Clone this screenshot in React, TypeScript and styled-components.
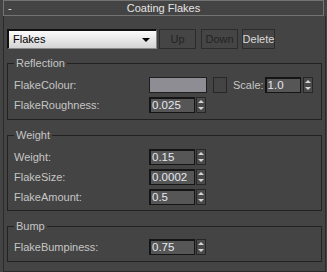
import React from "react";
import styled, { createGlobalStyle } from "styled-components";

const GlobalStyle = createGlobalStyle`
  html, body {
    margin: 0;
    background: #444444;
  }
  body {
    font-family: "Liberation Sans", Arial, sans-serif;
    font-size: 11px;
    color: #c6c6c6;
  }
`;

const Rollout = styled.div`
  width: 323px;
  margin-left: 3px;
  box-sizing: border-box;
`;

const Header = styled.div`
  height: 16px;
  margin-right: 2px;
  box-sizing: border-box;
  border: 1px solid #737373;
  display: flex;
  align-items: center;
  line-height: 14px;
  color: #e6e6e6;
  .toggle {
    width: 12px;
    padding-left: 4px;
  }
  .title {
    flex: 1;
    text-align: center;
  }
`;

const Body = styled.div`
  height: 256px;
  box-sizing: border-box;
  border: 1px solid #2b2b2b;
  border-top: none;
  padding: 13px 3px 9px 3px;
  display: flex;
  flex-direction: column;
`;

const Toolbar = styled.div`
  display: flex;
  align-items: center;
  height: 20px;
  margin-bottom: 7px;
`;

const Dropdown = styled.div`
  position: relative;
  width: 150px;
  height: 20px;
  box-sizing: border-box;
  border: 1px solid #8a8a8a;
  border-top: 2px solid #101010;
  border-left: 2px solid #101010;
  background: linear-gradient(#fbfbfb, #e4e4e4 60%, #d4d4d4);
  color: #000;
  font-size: 11px;
  line-height: 17px;
  padding-left: 4px;
  &::after {
    content: "";
    position: absolute;
    right: 6px;
    top: 7px;
    border-left: 4px solid transparent;
    border-right: 4px solid transparent;
    border-top: 4px solid #000;
  }
`;

const Button = styled.div<{ $w: number; $ml: number; $disabled?: boolean }>`
  width: ${({ $w }) => $w}px;
  margin-left: ${({ $ml }) => $ml}px;
  height: 20px;
  box-sizing: border-box;
  border: 1px solid #2c2c2c;
  background: #454545;
  color: ${({ $disabled }) => ($disabled ? "#232323" : "#dadada")};
  font-size: 11px;
  display: flex;
  align-items: center;
  justify-content: center;
`;

const Group = styled.fieldset<{ $pt?: number; $pb?: number }>`
  margin: 0 0 8px 0;
  padding: ${({ $pt = 7, $pb = 6 }) => `${$pt}px 6px ${$pb}px 6px`};
  border: 1px solid #222222;
  min-inline-size: 0;
  display: flex;
  flex-direction: column;
  gap: 4px;
  &:last-child {
    margin-bottom: 0;
  }
  legend {
    padding: 0 2px;
    line-height: 14px;
    color: #c6c6c6;
  }
`;

const Row = styled.div`
  display: flex;
  align-items: center;
  height: 16px;
`;

const Label = styled.span`
  width: 135px;
  flex: none;
`;

const Swatch = styled.div`
  width: 58px;
  height: 16px;
  box-sizing: border-box;
  border: 1px solid #1e1e1e;
  background: #8e8d93;
`;

const MapSlot = styled.div`
  width: 14px;
  height: 16px;
  margin-left: 6px;
  box-sizing: border-box;
  border: 1px solid #262626;
  background: #444444;
`;

const InlineLabel = styled.span`
  margin: 0 1px 0 6px;
`;

const SpinBox = styled.div<{ $gap: number }>`
  display: flex;
  gap: ${({ $gap }) => $gap}px;
`;

const SpinField = styled.div<{ $w: number }>`
  width: ${({ $w }) => $w}px;
  height: 16px;
  box-sizing: border-box;
  border: 1px solid #151515;
  border-top-width: 2px;
  border-left-width: 2px;
  background: #565656;
  color: #e4e8f0;
  font-size: 11.5px;
  line-height: 13px;
  padding-left: 1px;
`;

const SpinArrows = styled.div`
  width: 10px;
  height: 16px;
  box-sizing: border-box;
  border: 1px solid #262626;
  background: #4a4a4a;
  display: flex;
  flex-direction: column;
  justify-content: space-between;
  align-items: center;
  padding: 2px 0;
`;

const Arrow = styled.span<{ $down?: boolean }>`
  width: 0;
  height: 0;
  border-left: 3px solid transparent;
  border-right: 3px solid transparent;
  ${({ $down }) =>
    $down ? "border-top: 3px solid #d4d4d4;" : "border-bottom: 3px solid #d4d4d4;"}
`;

type SpinnerProps = { value: string; width?: number; gap?: number };
const Spinner: React.FC<SpinnerProps> = ({ value, width = 46, gap = 1 }) => (
  <SpinBox $gap={gap}>
    <SpinField $w={width}>{value}</SpinField>
    <SpinArrows>
      <Arrow />
      <Arrow $down />
    </SpinArrows>
  </SpinBox>
);

const App: React.FC = () => {
  return (
    <>
      <GlobalStyle />
      <Rollout>
        <Header>
          <span className="toggle">-</span>
          <span className="title">Coating Flakes</span>
          <span className="toggle" />
        </Header>
        <Body>
          <Toolbar>
            <Dropdown>Flakes</Dropdown>
            <Button $w={37} $ml={2} $disabled>
              Up
            </Button>
            <Button $w={37} $ml={5} $disabled>
              Down
            </Button>
            <Button $w={33} $ml={4}>
              Delete
            </Button>
          </Toolbar>

          <Group>
            <legend>Reflection</legend>
            <Row>
              <Label>FlakeColour:</Label>
              <Swatch />
              <MapSlot />
              <InlineLabel>Scale:</InlineLabel>
              <Spinner value="1.0" width={36} gap={2} />
            </Row>
            <Row>
              <Label>FlakeRoughness:</Label>
              <Spinner value="0.025" />
            </Row>
          </Group>

          <Group $pb={5}>
            <legend>Weight</legend>
            <Row>
              <Label>Weight:</Label>
              <Spinner value="0.15" />
            </Row>
            <Row>
              <Label>FlakeSize:</Label>
              <Spinner value="0.0002" />
            </Row>
            <Row>
              <Label>FlakeAmount:</Label>
              <Spinner value="0.5" />
            </Row>
          </Group>

          <Group $pt={6}>
            <legend>Bump</legend>
            <Row>
              <Label>FlakeBumpiness:</Label>
              <Spinner value="0.75" />
            </Row>
          </Group>
        </Body>
      </Rollout>
    </>
  );
};

export default App;
